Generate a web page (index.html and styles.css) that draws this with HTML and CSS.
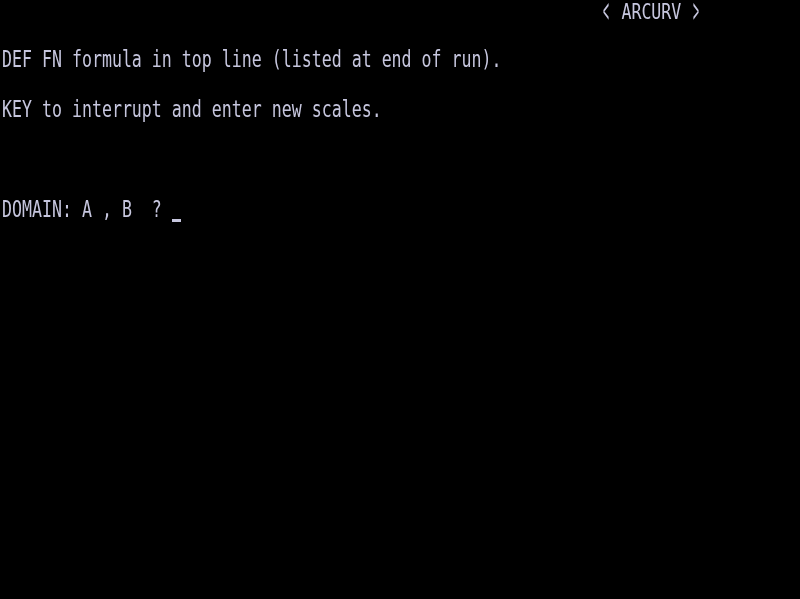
FILE: index.html
```html
<!DOCTYPE html>
<html>
<head>
<meta charset="utf-8">
<link rel="stylesheet" href="styles.css">
</head>
<body>
<div class="screen">
  <div class="row title"><span class="txt"><span class="br">&lt;</span> ARCURV <span class="br">&gt;</span></span></div>
  <div class="row"></div>
  <div class="row"><span class="txt">DEF FN formula in top line (listed at end of run).</span></div>
  <div class="row"></div>
  <div class="row"><span class="txt">KEY to interrupt and enter new scales.</span></div>
  <div class="row"></div>
  <div class="row"></div>
  <div class="row"></div>
  <div class="row"><span class="txt">DOMAIN: A , B  ? </span><span class="cursor"></span></div>
</div>
</body>
</html>
```

FILE: styles.css
```css
html, body {
  margin: 0;
  padding: 0;
  background: #000;
}
.screen {
  width: 800px;
  height: 599px;
  overflow: hidden;
  display: flex;
  flex-direction: column;
  font-family: "DejaVu Sans Mono", monospace;
  font-size: 16.6px;
  color: #c6c6de;
}
.row {
  height: 25px;
  display: flex;
  align-items: center;
  white-space: pre;
  padding-left: 2px;
}
.txt {
  display: inline-block;
  transform: translateY(-3px) scaleY(1.4);
  transform-origin: 50% 50%;
  filter: blur(0.35px);
}
.title {
  padding-left: calc(60ch + 2px);
}
.title .txt {
  transform: translateY(-1px) scaleY(1.3);
}
.br {
  display: inline-block;
  transform: scale(0.6, 1.6);
  transform-origin: 50% 55%;
}
.cursor {
  display: inline-block;
  width: 9px;
  height: 3px;
  background: #c6c6de;
  margin-top: 16px;
  filter: blur(0.3px);
}
```
